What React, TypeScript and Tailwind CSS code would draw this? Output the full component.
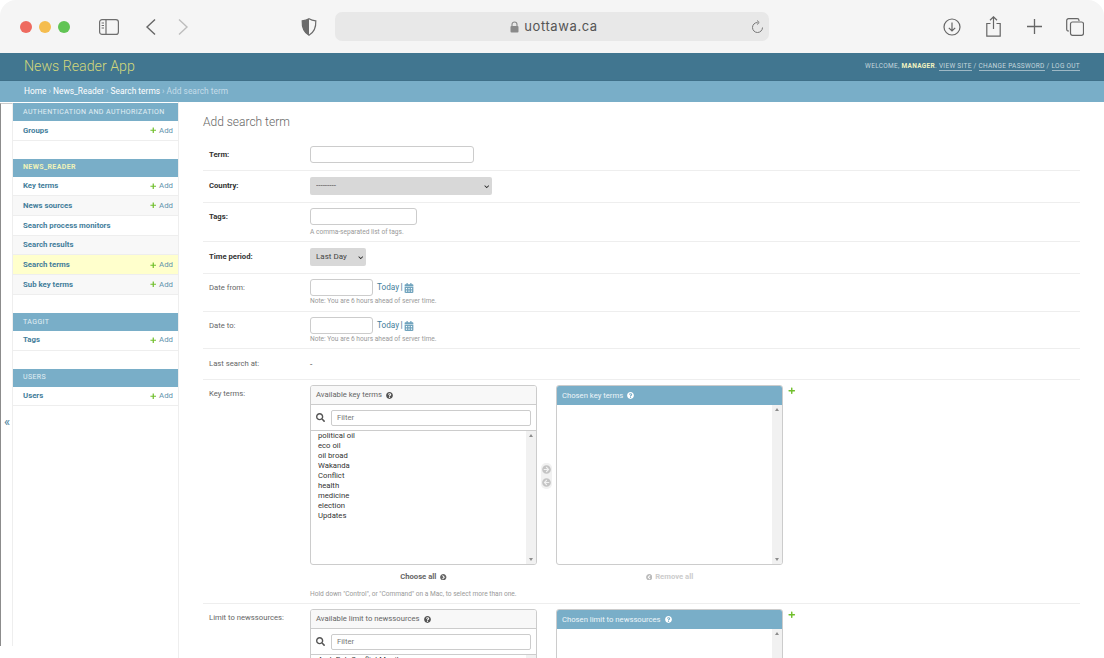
import { ReactNode } from "react";
import {
  FaArrowCircleLeft,
  FaArrowCircleRight,
  FaCalendarAlt,
  FaChevronCircleLeft,
  FaChevronCircleRight,
  FaChevronDown,
  FaPlus,
  FaQuestionCircle,
  FaSearch,
} from "react-icons/fa";

const ROBOTO = "font-['Roboto',sans-serif]";

const Toolbar = () => (
  <div className="flex h-[53px] items-center rounded-t-[16px] bg-[#f5f5f5] text-[#666]">
    <div className="ml-[20px] flex gap-[7px]">
      <span className="h-[12px] w-[12px] rounded-full bg-[#ee6a5f]" />
      <span className="h-[12px] w-[12px] rounded-full bg-[#f5bd4f]" />
      <span className="h-[12px] w-[12px] rounded-full bg-[#61c454]" />
    </div>
    <svg className="ml-[29px]" width="20" height="16" viewBox="0 0 20 16" fill="none" stroke="#6e6e6e" strokeWidth="1.2">
      <rect x="0.6" y="0.6" width="18.8" height="14.8" rx="2.5" />
      <path d="M7 0.6V15.4M2.6 4H5M2.6 6.5H5M2.6 9H5" />
    </svg>
    <svg className="ml-[26px]" width="12" height="18" viewBox="0 0 12 18" fill="none" stroke="#666" strokeWidth="1.4">
      <path d="M10 1.5 2 9l8 7.5" />
    </svg>
    <svg className="ml-[20px]" width="12" height="18" viewBox="0 0 12 18" fill="none" stroke="#bdbdbd" strokeWidth="1.4">
      <path d="M2 1.5 10 9l-8 7.5" />
    </svg>
    <svg className="ml-[112px]" width="16" height="18" viewBox="0 0 16 18">
      <path d="M8 .8c2 1.2 4.3 1.8 6.8 2 .3 6.600-1.600 11.600-6.800 14.400C2.800 14.400.9 9.400 1.200 2.800 3.700 2.600 6 2 8 .8Z" fill="none" stroke="#6b6b6b" strokeWidth="1.2" />
      <path d="M8 .8v16.400C2.800 14.400.9 9.400 1.200 2.800 3.700 2.600 6 2 8 .8Z" fill="#6b6b6b" />
    </svg>
    <div className="relative ml-[18px] flex h-[29px] w-[434px] items-center justify-center rounded-[7px] bg-[#e8e8e8] pl-[4px]">
      <svg className="mr-[5px]" width="9" height="12" viewBox="0 0 9 12">
        <path d="M2 5V3.500a2.500 2.500 0 0 1 5 0V5" fill="none" stroke="#8a8a8a" strokeWidth="1.100" />
        <rect x="0.500" y="5" width="8" height="6.500" rx="1" fill="#8a8a8a" />
      </svg>
      <span className="font-['Inter',sans-serif] text-[13px] tracking-[0.6px] text-[#555]">uottawa.ca</span>
      <svg className="absolute right-[5px] top-[8px]" width="13" height="14" viewBox="0 0 13 14" fill="none" stroke="#777" strokeWidth="1">
        <path d="M6.500 2.500a5 5 0 1 0 5 5M6 .5l2.200 2L6 4.500" />
      </svg>
    </div>
    <svg className="ml-[174px]" width="18" height="18" viewBox="0 0 18 18" fill="none" stroke="#666" strokeWidth="1.200">
      <circle cx="9" cy="9" r="8" />
      <path d="M9 4.500v8.500M5.800 9.800 9 13l3.200-3.200" />
    </svg>
    <svg className="ml-[25px]" width="15" height="21" viewBox="0 0 15 21" fill="none" stroke="#666" strokeWidth="1.200">
      <path d="M4.500 7.500H.8v12.700h13.400V7.500h-3.700M7.500 13V1M4 4.200 7.500.8 11 4.200" />
    </svg>
    <svg className="ml-[26px]" width="15" height="15" viewBox="0 0 15 15" fill="none" stroke="#666" strokeWidth="1.300">
      <path d="M7.500 0v15M0 7.500h15" />
    </svg>
    <svg className="ml-[24px]" width="18" height="18" viewBox="0 0 18 18" fill="none" stroke="#666" strokeWidth="1.200">
      <path d="M3 13H2.500A1.800 1.800 0 0 1 .7 11.200V2.500A1.800 1.800 0 0 1 2.500.7h8.700A1.800 1.800 0 0 1 13 2.500V3" />
      <rect x="4.500" y="4" width="13" height="13.300" rx="2" />
    </svg>
  </div>
);

const Header = () => (
  <>
    <div className="flex h-[28px] items-center justify-between border-b border-[#3f7089] bg-[#417690] pl-[24px] pr-[24px]">
      <span className="text-[14.200px] font-light text-[#d3d87b]">News Reader App</span>
      <div className="text-[6.500px] uppercase tracking-[0.300px] text-[#c5d6dd]">
        Welcome, <strong className="text-[#f1f3c0]">manager</strong>.{" "}
        <span className="border-b border-[#9db8c5]">View site</span> /{" "}
        <span className="border-b border-[#9db8c5]">Change password</span> /{" "}
        <span className="border-b border-[#9db8c5]">Log out</span>
      </div>
    </div>
    <div className="flex h-[21px] items-center bg-[#79aec8] pl-[24px] text-[8.400px] text-white">
      Home<span className="mx-[2px] text-[#c4dce8]">›</span>News_Reader
      <span className="mx-[2px] text-[#c4dce8]">›</span>Search terms
      <span className="mx-[2px] text-[#c4dce8]">›</span>
      <span className="text-[#c4dce8]">Add search term</span>
    </div>
  </>
);

type Model = { name: string; add?: boolean; active?: boolean };

const AppModule = ({ title, models, current }: { title: string; models: Model[]; current?: boolean }) => (
  <div className="mb-[18px]">
    <div
      className={`flex h-[18px] items-center pl-[10px] text-[7px] uppercase tracking-[0.400px] ${
        current ? "font-bold text-[#f0f3b8]" : "text-[#e3eef4]"
      } bg-[#79aec8]`}
    >
      {title}
    </div>
    {models.map((m, i) => (
      <div
        key={m.name}
        className={`flex h-[19.700px] items-center justify-between border-b border-[#eeeeee] pl-[10px] pr-[5px] text-[7.800px] ${
          m.active ? "bg-[#ffffcc]" : i % 2 ? "bg-[#f8f8f8]" : "bg-white"
        }`}
      >
        <span className="font-bold text-[#447e9b]">{m.name}</span>
        {m.add && (
          <span className="flex items-center gap-[3px] text-[#5f94ad]">
            <FaPlus className="text-[6.500px] text-[#70bf2b]" />
            Add
          </span>
        )}
      </div>
    ))}
  </div>
);

const Sidebar = () => (
  <div className="flex w-[179px] shrink-0">
    <div className="mt-px flex h-[543px] w-[13px] items-center justify-center border-l-[1.500px] border-t border-[#8c8c8c] border-t-[#cccccc] border-r border-r-[#eeeeee] pl-[1px] pt-[94px] text-[13px] text-[#447e9b]">
      «
    </div>
    <div className="w-[166px] border-r border-[#eeeeee] pt-px">
      <AppModule title="Authentication and Authorization" models={[{ name: "Groups", add: true }]} />
      <AppModule
        current
        title="News_Reader"
        models={[
          { name: "Key terms", add: true },
          { name: "News sources", add: true },
          { name: "Search process monitors" },
          { name: "Search results" },
          { name: "Search terms", add: true, active: true },
          { name: "Sub key terms", add: true },
        ]}
      />
      <AppModule title="Taggit" models={[{ name: "Tags", add: true }]} />
      <AppModule title="Users" models={[{ name: "Users", add: true }]} />
    </div>
  </div>
);

const Row = ({
  label,
  required,
  height,
  top = "pt-[5px]",
  children,
}: {
  label: string;
  required?: boolean;
  height: string;
  top?: string;
  children?: ReactNode;
}) => (
  <div className={`flex border-b border-[#eeeeee] ${height} ${top}`}>
    <label
      className={`w-[107px] shrink-0 pl-[6px] pt-[3px] text-[7.700px] leading-[12px] ${
        required ? "font-bold text-[#333333]" : "text-[#666666]"
      }`}
    >
      {label}
    </label>
    <div>{children}</div>
  </div>
);

const TextBox = ({ width }: { width: string }) => (
  <input type="text" className={`block h-[17px] rounded-[3px] border border-[#cccccc] bg-white ${width}`} />
);

const SelectBox = ({ width, value }: { width: string; value: string }) => (
  <div className={`relative h-[18px] ${width}`}>
    <select className="block h-full w-full appearance-none rounded-[2px] bg-[#d8d8d8] pl-[6px] text-[8px] text-[#444]">
      <option>{value}</option>
    </select>
    <FaChevronDown className="pointer-events-none absolute right-[3px] top-[6.500px] text-[5.500px] text-[#222]" />
  </div>
);

const Help = ({ children, top = "mt-[2px]" }: { children: ReactNode; top?: string }) => (
  <div className={`${top} text-[6.600px] leading-[10px] text-[#999999]`}>{children}</div>
);

const DateField = () => (
  <>
    <div className="flex h-[17px] items-center">
      <TextBox width="w-[63px]" />
      <span className="ml-[4px] text-[8.200px] text-[#447e9b]">Today</span>
      <span className="mx-[1.500px] text-[8.200px] font-bold text-[#447e9b]">|</span>
      <FaCalendarAlt className="text-[10px] text-[#6fa3bd]" />
    </div>
    <Help top="mt-0">Note: You are 6 hours ahead of server time.</Help>
  </>
);

const ListBox = ({ options, height }: { options?: string[]; height: string }) => (
  <div className={`flex w-full ${height}`}>
    <div className="flex-1 pl-[7px] text-[7.700px] leading-[10px] text-[#333333]">
      {options?.map((o) => <div key={o}>{o}</div>)}
    </div>
    <div className="flex w-[10px] flex-col items-center justify-between bg-[#f1f1f1] py-[3px] text-[#888]">
      <span className="h-0 w-0 border-x-[2.500px] border-b-[3px] border-x-transparent border-b-[#8d8d8d]" />
      <span className="h-0 w-0 border-x-[2.500px] border-t-[3px] border-x-transparent border-t-[#8d8d8d]" />
    </div>
  </div>
);

const Selector = ({ name, options }: { name: string; options?: string[] }) => (
  <div className="flex items-start">
    <div className="w-[227px]">
      <div className="overflow-hidden rounded-[3px] border border-[#cccccc]">
        <div className="flex h-[19px] items-center gap-[4px] border-b border-[#cccccc] bg-[#f8f8f8] pl-[5px] text-[7.700px] text-[#666666]">
          Available {name}
          <FaQuestionCircle className="text-[7px] text-[#555]" />
        </div>
        <div className="flex h-[26px] items-center border-b border-[#cccccc] pl-[5px] pr-[5px]">
          <FaSearch className="mr-[6px] text-[9px] text-[#555]" />
          <div className="flex h-[16px] flex-1 items-center rounded-[2px] border border-[#cccccc] pl-[5px] text-[7.700px] text-[#777]">
            Filter
          </div>
        </div>
        <ListBox options={options} height="h-[133px]" />
      </div>
      <div className="mt-[6px] flex items-center justify-center gap-[4px] text-[7.700px] font-bold text-[#666666]">
        Choose all
        <FaChevronCircleRight className="text-[6.500px] text-[#666]" />
      </div>
    </div>
    <div className="mx-[4px] mt-[78px] flex h-[26px] w-[11px] flex-col items-center justify-center gap-[3.500px] rounded-[5px] bg-[#f1f1f1]">
      <FaArrowCircleRight className="text-[9px] text-[#c4c4c4]" />
      <FaArrowCircleLeft className="text-[9px] text-[#c4c4c4]" />
    </div>
    <div className="w-[227px]">
      <div className="overflow-hidden rounded-[3px] border border-[#cccccc]">
        <div className="flex h-[19px] items-center gap-[4px] bg-[#79aec8] pl-[5px] text-[7.700px] text-[#eef5f8]">
          Chosen {name}
          <FaQuestionCircle className="text-[7px] text-white" />
        </div>
        <ListBox height="h-[159px]" />
      </div>
      <div className="mt-[6px] flex items-center justify-center gap-[3px] text-[7.700px] font-bold text-[#cccccc]">
        <FaChevronCircleLeft className="text-[6.500px] text-[#bbbbbb]" />
        Remove all
      </div>
    </div>
    <FaPlus className="ml-[5px] mt-[2px] text-[7.500px] text-[#70bf2b]" />
  </div>
);

const App = () => {
  return (
    <div className={`h-[658px] w-[1104px] overflow-hidden bg-white ${ROBOTO}`}>
      <Toolbar />
      <Header />
      <div className="flex">
        <Sidebar />
        <div className="w-[877px] shrink-0 pl-[24px]">
          <div className="box-content h-[38px] w-[877px]">
            <h1 className="pt-[12px] text-[12px] font-light leading-[16px] text-[#666666]">Add search term</h1>
          </div>
          <div className="w-[877px]">
            <Row label="Term:" required height="h-[31px]" top="pt-[6px]">
              <TextBox width="w-[164px]" />
            </Row>
            <Row label="Country:" required height="h-[32px]" top="pt-[6px]">
              <SelectBox width="w-[182px]" value="---------" />
            </Row>
            <Row label="Tags:" required height="h-[39px]">
              <TextBox width="w-[107px]" />
              <Help>A comma-separated list of tags.</Help>
            </Row>
            <Row label="Time period:" required height="h-[32px]" top="pt-[6px]">
              <SelectBox width="w-[56px]" value="Last Day" />
            </Row>
            <Row label="Date from:" height="h-[38px]">
              <DateField />
            </Row>
            <Row label="Date to:" height="h-[37px]">
              <DateField />
            </Row>
            <Row label="Last search at:" height="h-[31px]" top="pt-[6px]">
              <div className="pt-[3px] text-[8.500px] leading-[12px] text-[#666666]">-</div>
            </Row>
            <Row label="Key terms:" height="h-[224px]">
              <Selector
                name="key terms"
                options={["political oil", "eco oil", "oil broad", "Wakanda", "Conflict", "health", "medicine", "election", "Updates"]}
              />
              <Help top="mt-[6px]">Hold down "Control", or "Command" on a Mac, to select more than one.</Help>
            </Row>
            <Row label="Limit to newssources:" height="h-[240px]">
              <Selector name="limit to newssources" options={["Arab Rab Conflict Monitor"]} />
            </Row>
          </div>
        </div>
      </div>
    </div>
  );
};

export default App;
